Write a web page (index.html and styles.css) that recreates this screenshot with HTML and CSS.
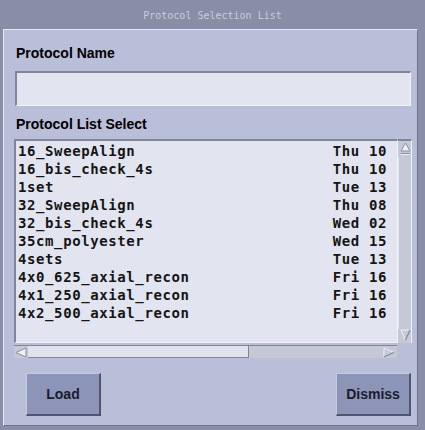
FILE: index.html
```html
<!DOCTYPE html>
<html>
<head>
<meta charset="utf-8">
<link rel="stylesheet" href="styles.css">
</head>
<body>
<div class="window">
  <div class="titlebar">Protocol Selection List</div>
  <div class="panel">
    <div class="label">Protocol Name</div>
    <div class="field"></div>
    <div class="label label-list">Protocol List Select</div>
    <div class="listarea">
      <div class="list">
        <div class="row"><span>16_SweepAlign</span><span>Thu 10</span></div>
        <div class="row"><span>16_bis_check_4s</span><span>Thu 10</span></div>
        <div class="row"><span>1set</span><span>Tue 13</span></div>
        <div class="row"><span>32_SweepAlign</span><span>Thu 08</span></div>
        <div class="row"><span>32_bis_check_4s</span><span>Wed 02</span></div>
        <div class="row"><span>35cm_polyester</span><span>Wed 15</span></div>
        <div class="row"><span>4sets</span><span>Tue 13</span></div>
        <div class="row"><span>4x0_625_axial_recon</span><span>Fri 16</span></div>
        <div class="row"><span>4x1_250_axial_recon</span><span>Fri 16</span></div>
        <div class="row"><span>4x2_500_axial_recon</span><span>Fri 16</span></div>
      </div>
      <div class="vscroll">
        <svg class="arrow" width="15" height="16" viewBox="0 0 15 16">
          <polygon points="7.5,2 12,10 3,10" fill="#eef0f6" stroke="#8a90a4" stroke-width="1"/>
          <line x1="3" y1="12.5" x2="12" y2="12.5" stroke="#8a90a4" stroke-width="1"/>
          <line x1="3" y1="13.5" x2="12" y2="13.5" stroke="#eef0f6" stroke-width="1"/>
        </svg>
        <div class="vtrack"></div>
        <svg class="arrow" width="15" height="14" viewBox="0 0 15 14">
          <polygon points="3,1 12,1 7.5,11" fill="#c5c9d6" stroke="#eef0f6" stroke-width="1"/>
          <line x1="12" y1="1" x2="7.5" y2="11" stroke="#7e8498" stroke-width="1.2"/>
        </svg>
      </div>
      <div class="hscroll">
        <svg class="arrow" width="14" height="13" viewBox="0 0 14 13">
          <polygon points="2,6.5 12,2 12,11" fill="#eef0f6" stroke="#8a90a4" stroke-width="1"/>
        </svg>
        <div class="hthumb"></div>
        <div class="htrack"></div>
        <svg class="arrow" width="16" height="13" viewBox="0 0 16 13">
          <polygon points="3,2 13,6.5 3,11" fill="#c5c9d6" stroke="#eef0f6" stroke-width="1"/>
          <line x1="13" y1="6.5" x2="3" y2="11" stroke="#7e8498" stroke-width="1.2"/>
        </svg>
      </div>
      <div class="corner"></div>
    </div>
    <div class="buttons">
      <div class="button">Load</div>
      <div class="button">Dismiss</div>
    </div>
  </div>
</div>
</body>
</html>
```
FILE: styles.css
```css
html, body {
  margin: 0;
  padding: 0;
}
body {
  width: 425px;
  height: 430px;
  background: #878ea6;
  overflow: hidden;
}
.window {
  display: flex;
  flex-direction: column;
  height: 430px;
}
.titlebar {
  height: 29px;
  display: flex;
  align-items: center;
  justify-content: center;
  font-family: "DejaVu Sans Mono", monospace;
  font-size: 10px;
  color: #c9cddb;
  padding-top: 2px;
  box-sizing: border-box;
}
.panel {
  flex: 1;
  margin: 0 7px 4px 3px;
  background: #b9bfd9;
  border-top: 1px solid #e6e9f4;
  border-left: 1px solid #e6e9f4;
  border-right: 1px solid #6e748c;
  border-bottom: 1px solid #6e748c;
  padding: 15px 6px 0 11px;
  display: flex;
  flex-direction: column;
}
.label {
  font-family: "Liberation Sans", Arial, sans-serif;
  font-weight: bold;
  font-size: 14px;
  line-height: 16px;
  color: #000;
  padding-left: 1px;
}
.field {
  margin-top: 10px;
  height: 35px;
  box-sizing: border-box;
  background: #e2e5ef;
  border-top: 2px solid #7f859a;
  border-left: 2px solid #7f859a;
  border-bottom: 1px solid #f2f4fa;
  border-right: 1px solid #f2f4fa;
}
.label-list {
  margin-top: 10px;
}
.listarea {
  margin-top: 7px;
  margin-left: -1px;
  display: grid;
  grid-template-columns: 383px 15px;
  grid-template-rows: 204px 15px;
}
.list {
  background: #e2e5ef;
  border-top: 2px solid #7f859a;
  border-left: 2px solid #7f859a;
  border-bottom: 1px solid #f2f4fa;
  padding: 1px 10px 0 2px;
  box-sizing: border-box;
  font-family: "DejaVu Sans Mono", monospace;
  font-weight: bold;
  font-size: 14px;
  letter-spacing: 0.6px;
  color: #151515;
}
.row {
  height: 18px;
  line-height: 18px;
  display: flex;
  justify-content: space-between;
  white-space: pre;
}
.vscroll {
  background: #c5c9d6;
  border-top: 2px solid #7f859a;
  border-left: 1px solid #eef0f6;
  border-right: 1px solid #f2f4fa;
  display: flex;
  flex-direction: column;
  box-sizing: border-box;
}
.vtrack {
  flex: 1;
  border-left: 1px solid #e6e9f2;
}
.arrow {
  display: block;
  flex: none;
}
.hscroll {
  margin-top: 2px;
  height: 13px;
  background: #c5c9d6;
  border-top: 1px solid #7f859a;
  display: flex;
  box-sizing: border-box;
}
.hthumb {
  width: 220px;
  background: #e0e3ec;
  border-right: 1px solid #7f859a;
  border-bottom: 1px solid #7f859a;
}
.htrack {
  flex: 1;
}
.corner {
  background: #b9bfd9;
}
.buttons {
  margin-top: 15px;
  display: flex;
  justify-content: space-between;
  padding-left: 11px;
}
.button {
  width: 75px;
  height: 43px;
  box-sizing: border-box;
  background: #8c94b8;
  border-top: 1px solid #c4c9de;
  border-left: 1px solid #c4c9de;
  border-right: 2px solid #4f556c;
  border-bottom: 2px solid #4f556c;
  display: flex;
  align-items: center;
  justify-content: center;
  font-family: "Liberation Sans", Arial, sans-serif;
  font-weight: bold;
  font-size: 14px;
  color: #1a1c2e;
}
```
